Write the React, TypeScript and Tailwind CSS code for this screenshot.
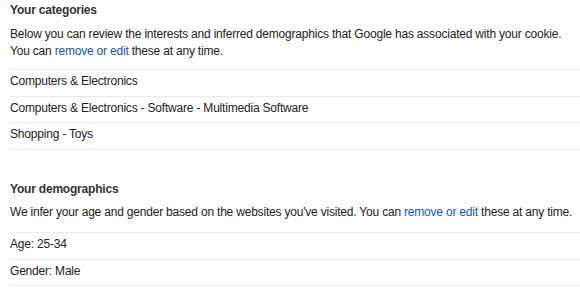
import React from 'react';

const categories = [
  'Computers & Electronics',
  'Computers & Electronics - Software - Multimedia Software',
  'Shopping - Toys',
];

const demographics = ['Age: 25-34', 'Gender: Male'];

const Link: React.FC<{ children: React.ReactNode }> = ({ children }) => (
  <a href="#" className="text-[#15c] no-underline">
    {children}
  </a>
);

const ItemList: React.FC<{ items: string[] }> = ({ items }) => (
  <ul className="border-b border-[#ebebeb]">
    {items.map((item) => (
      <li key={item} className="border-t border-[#ebebeb] pt-[3px] pb-[6.67px] leading-4">
        {item}
      </li>
    ))}
  </ul>
);

const App: React.FC = () => {
  return (
    <div className="w-[580px] h-[300px] overflow-hidden bg-white pl-[10px] pt-[2px] text-[12px] tracking-[-0.2px] leading-4 text-[#222] whitespace-nowrap font-['Liberation_Sans',Arial,sans-serif]">
      <section>
        <h2 className="font-bold text-[#333] leading-4">Your categories</h2>
        <p className="mt-[7.5px] mb-[9.5px] leading-[17px]">
          Below you can review the interests and inferred demographics that Google has associated with your cookie.
          <br />
          You can <Link>remove or edit</Link> these at any time.
        </p>
        <ItemList items={categories} />
      </section>

      <section className="mt-[31px]">
        <h2 className="font-bold text-[#333] leading-4">Your demographics</h2>
        <p className="mt-[7.5px] mb-[10.5px] leading-[17px]">
          We infer your age and gender based on the websites you've visited. You can <Link>remove or edit</Link> these
          at any time.
        </p>
        <ItemList items={demographics} />
      </section>
    </div>
  );
};

export default App;
